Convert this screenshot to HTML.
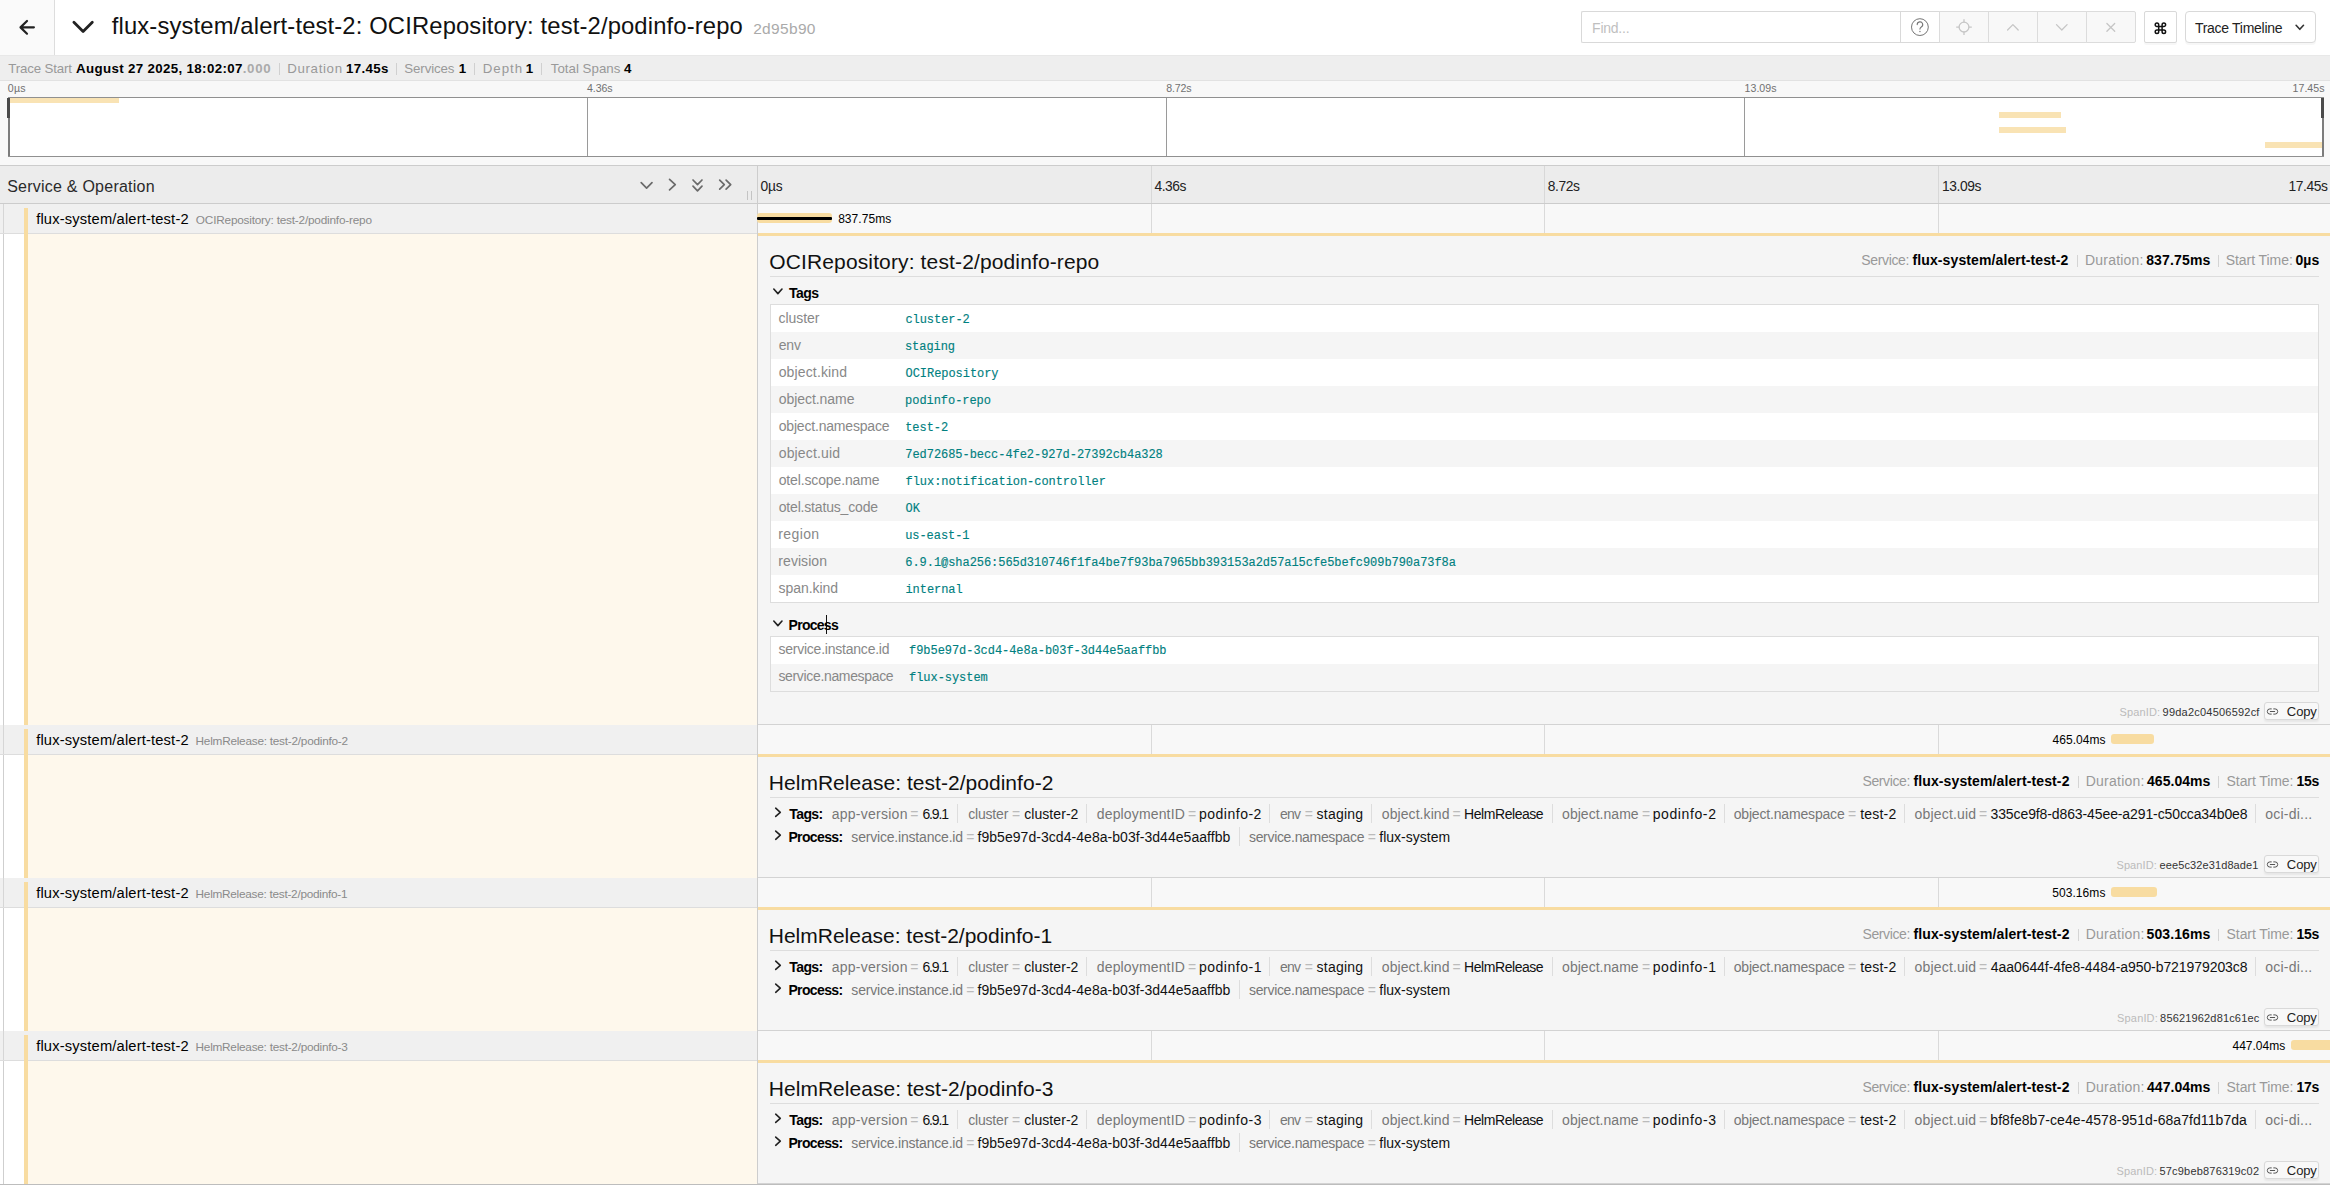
<!DOCTYPE html>
<html><head><meta charset="utf-8"><title>Jaeger UI</title><style>
html,body{margin:0;padding:0}body{width:2330px;height:1186px;overflow:hidden;background:#fff;position:relative;font-family:'Liberation Sans',sans-serif}
#bg div{position:absolute}
#tx span{position:absolute;white-space:pre;line-height:1}
svg{position:absolute;left:0;top:0}
</style></head><body>
<div id="bg">
<div style="left:0px;top:0px;width:2330px;height:55px;background:#fff;"></div>
<div style="left:0px;top:0px;width:54px;height:55px;background:#fafafa;"></div>
<div style="left:54px;top:0px;width:1px;height:55px;background:#dddddd;"></div>
<div style="left:0px;top:55px;width:2330px;height:1px;background:#e8e8e8;"></div>
<div style="left:1581px;top:11px;width:320px;height:32px;background:#fff;border:1px solid #d9d9d9;border-right:none;border-radius:2px 0 0 2px;box-sizing:border-box"></div>
<div style="left:1900px;top:11px;width:40px;height:32px;background:#fff;border:1px solid #d9d9d9;box-sizing:border-box"></div>
<div style="left:1939px;top:11px;width:50px;height:32px;background:#f8f8f8;border:1px solid #dcdcdc;box-sizing:border-box"></div>
<div style="left:1988px;top:11px;width:50px;height:32px;background:#f8f8f8;border:1px solid #dcdcdc;box-sizing:border-box"></div>
<div style="left:2037px;top:11px;width:50px;height:32px;background:#f8f8f8;border:1px solid #dcdcdc;box-sizing:border-box"></div>
<div style="left:2086px;top:11px;width:50px;height:32px;background:#f8f8f8;border:1px solid #dcdcdc;box-sizing:border-box;border-radius:0 2px 2px 0"></div>
<div style="left:2144px;top:11px;width:33px;height:32px;background:#fff;border:1px solid #d9d9d9;border-radius:2px;box-sizing:border-box;box-shadow:0 2px 0 rgba(0,0,0,0.03)"></div>
<div style="left:2185px;top:11px;width:131px;height:32px;background:#fff;border:1px solid #d9d9d9;border-radius:4px;box-sizing:border-box;box-shadow:0 2px 0 rgba(0,0,0,0.03)"></div>
<div style="left:0px;top:56px;width:2330px;height:24px;background:#eeeeee;"></div>
<div style="left:0px;top:80px;width:2330px;height:1px;background:#e2e2e2;"></div>
<div style="left:279px;top:63px;width:1px;height:12px;background:#d0d0d0;"></div>
<div style="left:396px;top:63px;width:1px;height:12px;background:#d0d0d0;"></div>
<div style="left:474px;top:63px;width:1px;height:12px;background:#d0d0d0;"></div>
<div style="left:541px;top:63px;width:1px;height:12px;background:#d0d0d0;"></div>
<div style="left:0px;top:81px;width:2330px;height:84px;background:#f8f8f8;"></div>
<div style="left:0px;top:165px;width:2330px;height:1px;background:#cccccc;"></div>
<div style="left:8px;top:97px;width:2316px;height:60px;background:#fff;border:1px solid #909090;box-sizing:border-box"></div>
<div style="left:587px;top:98px;width:1px;height:58px;background:#9a9a9a;"></div>
<div style="left:1166px;top:98px;width:1px;height:58px;background:#9a9a9a;"></div>
<div style="left:1744px;top:98px;width:1px;height:58px;background:#9a9a9a;"></div>
<div style="left:10px;top:98px;width:109px;height:5px;background:#f9e3b4;"></div>
<div style="left:1999px;top:112px;width:62px;height:6px;background:#f9e3b4;"></div>
<div style="left:1999px;top:127px;width:67px;height:6px;background:#f9e3b4;"></div>
<div style="left:2265px;top:142px;width:57px;height:6px;background:#f9e3b4;"></div>
<div style="left:8px;top:98px;width:2px;height:58px;background:#7c7c7c;"></div>
<div style="left:7px;top:98px;width:3px;height:20px;background:#4a4a4a;"></div>
<div style="left:2322px;top:98px;width:2px;height:58px;background:#7c7c7c;"></div>
<div style="left:2321px;top:98px;width:3px;height:20px;background:#4a4a4a;"></div>
<div style="left:0px;top:166px;width:2330px;height:37px;background:#ececec;"></div>
<div style="left:0px;top:203px;width:2330px;height:1px;background:#cccccc;"></div>
<div style="left:1151px;top:166px;width:1px;height:37px;background:#d8d8d8;"></div>
<div style="left:1544px;top:166px;width:1px;height:37px;background:#d8d8d8;"></div>
<div style="left:1938px;top:166px;width:1px;height:37px;background:#d8d8d8;"></div>
<div style="left:747px;top:191px;width:1px;height:9px;background:#c4c4c4;"></div>
<div style="left:751px;top:191px;width:1px;height:9px;background:#c4c4c4;"></div>
<div style="left:0px;top:204px;width:757px;height:981px;background:#fff;"></div>
<div style="left:757px;top:166px;width:1px;height:1019px;background:#cdcdcd;"></div>
<div style="left:3px;top:204px;width:1px;height:981px;background:#cfcfcf;"></div>
<div style="left:0px;top:204px;width:757px;height:29px;background:#f0f0f0;"></div>
<div style="left:0px;top:233px;width:757px;height:1px;background:#dddddd;"></div>
<div style="left:3px;top:204px;width:1px;height:29px;background:#d6d6d6;"></div>
<div style="left:758px;top:204px;width:1572px;height:29px;background:#f8f8f8;"></div>
<div style="left:1151px;top:204px;width:1px;height:29px;background:#dadada;"></div>
<div style="left:1544px;top:204px;width:1px;height:29px;background:#dadada;"></div>
<div style="left:1938px;top:204px;width:1px;height:29px;background:#dadada;"></div>
<div style="left:24px;top:208px;width:4px;height:517px;background:#f8dca1;"></div>
<div style="left:28px;top:234px;width:729px;height:491px;background:#fef8ec;"></div>
<div style="left:757px;top:213px;width:75px;height:10px;background:#f8dca1;border-radius:3px"></div>
<div style="left:757px;top:216.5px;width:75px;height:3.6px;background:#000;border-radius:1px"></div>
<div style="left:758px;top:233px;width:1572px;height:491px;background:#f5f5f5;"></div>
<div style="left:758px;top:233px;width:1572px;height:3px;background:#f8dca1;"></div>
<div style="left:758px;top:724px;width:1572px;height:1px;background:#d3d3d3;"></div>
<div style="left:2077px;top:255px;width:1px;height:12px;background:#d4d4d4;"></div>
<div style="left:2218px;top:255px;width:1px;height:12px;background:#d4d4d4;"></div>
<div style="left:770px;top:276px;width:1549px;height:1px;background:#dddddd;"></div>
<div style="left:2264px;top:702px;width:55px;height:18px;background:#f8f8f8;border:1px solid #d9d9d9;border-radius:3px;box-sizing:border-box;box-shadow:0 2px 2px rgba(0,0,0,0.06)"></div>
<div style="left:770px;top:304px;width:1549px;height:299px;background:#fff;border:1px solid #dddddd;box-sizing:border-box"></div>
<div style="left:771px;top:332px;width:1547px;height:27px;background:#f5f5f5;"></div>
<div style="left:771px;top:386px;width:1547px;height:27px;background:#f5f5f5;"></div>
<div style="left:771px;top:440px;width:1547px;height:27px;background:#f5f5f5;"></div>
<div style="left:771px;top:494px;width:1547px;height:27px;background:#f5f5f5;"></div>
<div style="left:771px;top:548px;width:1547px;height:27px;background:#f5f5f5;"></div>
<div style="left:770px;top:636px;width:1549px;height:56px;background:#fff;border:1px solid #dddddd;box-sizing:border-box"></div>
<div style="left:771px;top:664px;width:1547px;height:27px;background:#f5f5f5;"></div>
<div style="left:826px;top:615px;width:1px;height:19px;background:#111;"></div>
<div style="left:0px;top:725px;width:757px;height:29px;background:#f0f0f0;"></div>
<div style="left:0px;top:754px;width:757px;height:1px;background:#dddddd;"></div>
<div style="left:3px;top:725px;width:1px;height:29px;background:#d6d6d6;"></div>
<div style="left:758px;top:725px;width:1572px;height:29px;background:#f8f8f8;"></div>
<div style="left:1151px;top:725px;width:1px;height:29px;background:#dadada;"></div>
<div style="left:1544px;top:725px;width:1px;height:29px;background:#dadada;"></div>
<div style="left:1938px;top:725px;width:1px;height:29px;background:#dadada;"></div>
<div style="left:24px;top:729px;width:4px;height:149px;background:#f8dca1;"></div>
<div style="left:28px;top:755px;width:729px;height:123px;background:#fef8ec;"></div>
<div style="left:2111px;top:734px;width:43px;height:10px;background:#f8dca1;border-radius:3px"></div>
<div style="left:758px;top:754px;width:1572px;height:123px;background:#f5f5f5;"></div>
<div style="left:758px;top:754px;width:1572px;height:3px;background:#f8dca1;"></div>
<div style="left:758px;top:877px;width:1572px;height:1px;background:#d3d3d3;"></div>
<div style="left:2078px;top:776px;width:1px;height:12px;background:#d4d4d4;"></div>
<div style="left:2218px;top:776px;width:1px;height:12px;background:#d4d4d4;"></div>
<div style="left:770px;top:797px;width:1549px;height:1px;background:#dddddd;"></div>
<div style="left:2264px;top:855px;width:55px;height:18px;background:#f8f8f8;border:1px solid #d9d9d9;border-radius:3px;box-sizing:border-box;box-shadow:0 2px 2px rgba(0,0,0,0.06)"></div>
<div style="left:957px;top:804px;width:1px;height:19px;background:#dddddd;"></div>
<div style="left:1086px;top:804px;width:1px;height:19px;background:#dddddd;"></div>
<div style="left:1269px;top:804px;width:1px;height:19px;background:#dddddd;"></div>
<div style="left:1371px;top:804px;width:1px;height:19px;background:#dddddd;"></div>
<div style="left:1552px;top:804px;width:1px;height:19px;background:#dddddd;"></div>
<div style="left:1724px;top:804px;width:1px;height:19px;background:#dddddd;"></div>
<div style="left:1904px;top:804px;width:1px;height:19px;background:#dddddd;"></div>
<div style="left:2255px;top:804px;width:1px;height:19px;background:#dddddd;"></div>
<div style="left:1239px;top:827px;width:1px;height:19px;background:#dddddd;"></div>
<div style="left:0px;top:878px;width:757px;height:29px;background:#f0f0f0;"></div>
<div style="left:0px;top:907px;width:757px;height:1px;background:#dddddd;"></div>
<div style="left:3px;top:878px;width:1px;height:29px;background:#d6d6d6;"></div>
<div style="left:758px;top:878px;width:1572px;height:29px;background:#f8f8f8;"></div>
<div style="left:1151px;top:878px;width:1px;height:29px;background:#dadada;"></div>
<div style="left:1544px;top:878px;width:1px;height:29px;background:#dadada;"></div>
<div style="left:1938px;top:878px;width:1px;height:29px;background:#dadada;"></div>
<div style="left:24px;top:882px;width:4px;height:149px;background:#f8dca1;"></div>
<div style="left:28px;top:908px;width:729px;height:123px;background:#fef8ec;"></div>
<div style="left:2111px;top:887px;width:46px;height:10px;background:#f8dca1;border-radius:3px"></div>
<div style="left:758px;top:907px;width:1572px;height:123px;background:#f5f5f5;"></div>
<div style="left:758px;top:907px;width:1572px;height:3px;background:#f8dca1;"></div>
<div style="left:758px;top:1030px;width:1572px;height:1px;background:#d3d3d3;"></div>
<div style="left:2078px;top:929px;width:1px;height:12px;background:#d4d4d4;"></div>
<div style="left:2218px;top:929px;width:1px;height:12px;background:#d4d4d4;"></div>
<div style="left:770px;top:950px;width:1549px;height:1px;background:#dddddd;"></div>
<div style="left:2264px;top:1008px;width:55px;height:18px;background:#f8f8f8;border:1px solid #d9d9d9;border-radius:3px;box-sizing:border-box;box-shadow:0 2px 2px rgba(0,0,0,0.06)"></div>
<div style="left:957px;top:957px;width:1px;height:19px;background:#dddddd;"></div>
<div style="left:1086px;top:957px;width:1px;height:19px;background:#dddddd;"></div>
<div style="left:1269px;top:957px;width:1px;height:19px;background:#dddddd;"></div>
<div style="left:1371px;top:957px;width:1px;height:19px;background:#dddddd;"></div>
<div style="left:1552px;top:957px;width:1px;height:19px;background:#dddddd;"></div>
<div style="left:1724px;top:957px;width:1px;height:19px;background:#dddddd;"></div>
<div style="left:1904px;top:957px;width:1px;height:19px;background:#dddddd;"></div>
<div style="left:2255px;top:957px;width:1px;height:19px;background:#dddddd;"></div>
<div style="left:1239px;top:980px;width:1px;height:19px;background:#dddddd;"></div>
<div style="left:0px;top:1031px;width:757px;height:29px;background:#f0f0f0;"></div>
<div style="left:0px;top:1060px;width:757px;height:1px;background:#dddddd;"></div>
<div style="left:3px;top:1031px;width:1px;height:29px;background:#d6d6d6;"></div>
<div style="left:758px;top:1031px;width:1572px;height:29px;background:#f8f8f8;"></div>
<div style="left:1151px;top:1031px;width:1px;height:29px;background:#dadada;"></div>
<div style="left:1544px;top:1031px;width:1px;height:29px;background:#dadada;"></div>
<div style="left:1938px;top:1031px;width:1px;height:29px;background:#dadada;"></div>
<div style="left:24px;top:1035px;width:4px;height:149px;background:#f8dca1;"></div>
<div style="left:28px;top:1061px;width:729px;height:123px;background:#fef8ec;"></div>
<div style="left:2291px;top:1040px;width:39px;height:10px;background:#f8dca1;border-radius:3px 0 0 3px"></div>
<div style="left:758px;top:1060px;width:1572px;height:123px;background:#f5f5f5;"></div>
<div style="left:758px;top:1060px;width:1572px;height:3px;background:#f8dca1;"></div>
<div style="left:758px;top:1183px;width:1572px;height:1px;background:#d3d3d3;"></div>
<div style="left:2078px;top:1082px;width:1px;height:12px;background:#d4d4d4;"></div>
<div style="left:2218px;top:1082px;width:1px;height:12px;background:#d4d4d4;"></div>
<div style="left:770px;top:1103px;width:1549px;height:1px;background:#dddddd;"></div>
<div style="left:2264px;top:1161px;width:55px;height:18px;background:#f8f8f8;border:1px solid #d9d9d9;border-radius:3px;box-sizing:border-box;box-shadow:0 2px 2px rgba(0,0,0,0.06)"></div>
<div style="left:957px;top:1110px;width:1px;height:19px;background:#dddddd;"></div>
<div style="left:1086px;top:1110px;width:1px;height:19px;background:#dddddd;"></div>
<div style="left:1269px;top:1110px;width:1px;height:19px;background:#dddddd;"></div>
<div style="left:1371px;top:1110px;width:1px;height:19px;background:#dddddd;"></div>
<div style="left:1552px;top:1110px;width:1px;height:19px;background:#dddddd;"></div>
<div style="left:1724px;top:1110px;width:1px;height:19px;background:#dddddd;"></div>
<div style="left:1904px;top:1110px;width:1px;height:19px;background:#dddddd;"></div>
<div style="left:2255px;top:1110px;width:1px;height:19px;background:#dddddd;"></div>
<div style="left:1239px;top:1133px;width:1px;height:19px;background:#dddddd;"></div>
<div style="left:0px;top:1184px;width:2330px;height:1px;background:#bdbdbd;"></div>
<div style="left:0px;top:1185px;width:2330px;height:1px;background:#ffffff;"></div>
</div>
<svg width="2330" height="1186" viewBox="0 0 2330 1186">
<path d="M2271.3,708.9 h-1.4 a2.6,2.6 0 0 0 0,5.2 h1.4 M2273.7,708.9 h1.4 a2.6,2.6 0 0 1 0,5.2 h-1.4 M2270.3,711.5 h4.4" stroke="#555" stroke-width="1.0" fill="none" stroke-linecap="round"/>
<path d="M773.80,289.00 L777.90,293.60 L782.00,289.00" stroke="#222" stroke-width="1.6" fill="none" stroke-linecap="round" stroke-linejoin="round"/>
<path d="M773.80,621.00 L777.90,625.60 L782.00,621.00" stroke="#222" stroke-width="1.6" fill="none" stroke-linecap="round" stroke-linejoin="round"/>
<path d="M2271.3,861.9 h-1.4 a2.6,2.6 0 0 0 0,5.2 h1.4 M2273.7,861.9 h1.4 a2.6,2.6 0 0 1 0,5.2 h-1.4 M2270.3,864.5 h4.4" stroke="#555" stroke-width="1.0" fill="none" stroke-linecap="round"/>
<path d="M775.70,808.20 L780.30,812.30 L775.70,816.40" stroke="#222" stroke-width="1.6" fill="none" stroke-linecap="round" stroke-linejoin="round"/>
<path d="M775.70,831.10 L780.30,835.20 L775.70,839.30" stroke="#222" stroke-width="1.6" fill="none" stroke-linecap="round" stroke-linejoin="round"/>
<path d="M2271.3,1014.9 h-1.4 a2.6,2.6 0 0 0 0,5.2 h1.4 M2273.7,1014.9 h1.4 a2.6,2.6 0 0 1 0,5.2 h-1.4 M2270.3,1017.5 h4.4" stroke="#555" stroke-width="1.0" fill="none" stroke-linecap="round"/>
<path d="M775.70,961.20 L780.30,965.30 L775.70,969.40" stroke="#222" stroke-width="1.6" fill="none" stroke-linecap="round" stroke-linejoin="round"/>
<path d="M775.70,984.10 L780.30,988.20 L775.70,992.30" stroke="#222" stroke-width="1.6" fill="none" stroke-linecap="round" stroke-linejoin="round"/>
<path d="M2271.3,1167.9 h-1.4 a2.6,2.6 0 0 0 0,5.2 h1.4 M2273.7,1167.9 h1.4 a2.6,2.6 0 0 1 0,5.2 h-1.4 M2270.3,1170.5 h4.4" stroke="#555" stroke-width="1.0" fill="none" stroke-linecap="round"/>
<path d="M775.70,1114.20 L780.30,1118.30 L775.70,1122.40" stroke="#222" stroke-width="1.6" fill="none" stroke-linecap="round" stroke-linejoin="round"/>
<path d="M775.70,1137.10 L780.30,1141.20 L775.70,1145.30" stroke="#222" stroke-width="1.6" fill="none" stroke-linecap="round" stroke-linejoin="round"/>
<path d="M33.9,27.35 H20.6 M27.0,21.0 L20.5,27.35 L27.0,33.7" stroke="#222" stroke-width="2.2" fill="none" stroke-linecap="round" stroke-linejoin="round"/>
<path d="M73.9,22.2 L83.1,31.4 L92.3,22.2" stroke="#222" stroke-width="2.8" fill="none" stroke-linecap="round" stroke-linejoin="round"/>
<circle cx="1919.9" cy="27.1" r="8.4" stroke="#757575" stroke-width="1.0" fill="none"/>
<path d="M1917.2,24.6 a2.75,2.75 0 1 1 4.1,2.4 c-0.9,0.55 -1.35,1.0 -1.35,2.1" stroke="#757575" stroke-width="1.1" fill="none" stroke-linecap="round"/><circle cx="1919.95" cy="31.5" r="0.7" fill="#757575"/>
<circle cx="1964" cy="27.1" r="4.9" stroke="#c6c6c6" stroke-width="1.3" fill="none"/><path d="M1964,19.3 v3.2 M1964,31.7 v3.2 M1956.2,27.1 h3.2 M1968.6,27.1 h3.2" stroke="#c6c6c6" stroke-width="1.3" fill="none"/>
<path d="M2007.60,30.00 L2012.90,24.60 L2018.20,30.00" stroke="#c6c6c6" stroke-width="1.3" fill="none" stroke-linecap="round" stroke-linejoin="round"/>
<path d="M2056.50,24.60 L2061.80,30.00 L2067.10,24.60" stroke="#c6c6c6" stroke-width="1.3" fill="none" stroke-linecap="round" stroke-linejoin="round"/>
<path d="M2106.9,23.5 L2114.7,31.3 M2114.7,23.5 L2106.9,31.3" stroke="#c6c6c6" stroke-width="1.3" fill="none" stroke-linecap="round"/>
<path d="M2158.7000000000003,24.85 V31.75 M2162.1,24.85 V31.75 M2156.9500000000003,26.6 H2163.85 M2156.9500000000003,30.0 H2163.85 M2158.7000000000003,24.85 A1.75,1.75 0 1 0 2156.9500000000003,26.6 M2162.1,24.85 A1.75,1.75 0 1 1 2163.85,26.6 M2158.7000000000003,31.75 A1.75,1.75 0 1 1 2156.9500000000003,30.0 M2162.1,31.75 A1.75,1.75 0 1 0 2163.85,30.0 " stroke="#111" stroke-width="1.5" fill="none"/>
<path d="M2296.10,25.30 L2299.80,29.30 L2303.50,25.30" stroke="#333" stroke-width="1.6" fill="none" stroke-linecap="round" stroke-linejoin="round"/>
<path d="M641.20,182.55 L646.60,188.05 L652.00,182.55" stroke="#6a6a6a" stroke-width="1.7" fill="none" stroke-linecap="round" stroke-linejoin="round"/>
<path d="M669.55,179.30 L675.25,184.60 L669.55,189.90" stroke="#6a6a6a" stroke-width="1.7" fill="none" stroke-linecap="round" stroke-linejoin="round"/>
<path d="M693.00,180.00 L697.50,184.60 L702.00,180.00" stroke="#6a6a6a" stroke-width="1.7" fill="none" stroke-linecap="round" stroke-linejoin="round"/>
<path d="M693.00,186.20 L697.50,190.80 L702.00,186.20" stroke="#6a6a6a" stroke-width="1.7" fill="none" stroke-linecap="round" stroke-linejoin="round"/>
<path d="M719.70,180.20 L724.30,184.70 L719.70,189.20" stroke="#6a6a6a" stroke-width="1.7" fill="none" stroke-linecap="round" stroke-linejoin="round"/>
<path d="M726.10,180.20 L730.70,184.70 L726.10,189.20" stroke="#6a6a6a" stroke-width="1.7" fill="none" stroke-linecap="round" stroke-linejoin="round"/>
</svg>
<div id="tx">
<span id="t0" style="left:111.78px;top:13.57px;font-size:23.8px;color:#111;letter-spacing:0.137px">flux-system/alert-test-2: OCIRepository: test-2/podinfo-repo</span>
<span id="t1" style="left:753.15px;top:20.53px;font-size:15.5px;color:#aaa;letter-spacing:0.329px">2d95b90</span>
<span id="t2" style="left:1592.09px;top:21.10px;font-size:14px;color:#bfbfbf;letter-spacing:-0.241px">Find...</span>
<span id="t3" style="left:2194.91px;top:20.70px;font-size:14px;color:#222;letter-spacing:-0.283px">Trace Timeline</span>
<span id="t4" style="left:8.24px;top:62.40px;font-size:13.3px;color:#999;letter-spacing:-0.162px">Trace Start</span>
<span id="t5" style="left:76.06px;top:62.40px;font-size:13.3px;color:#000;font-weight:700;letter-spacing:0.352px">August 27 2025, 18:02:07</span>
<span id="t6" style="left:242.64px;top:62.40px;font-size:13.3px;color:#aaa;font-weight:700;letter-spacing:0.722px">.000</span>
<span id="t7" style="left:287.28px;top:62.40px;font-size:13.3px;color:#999;letter-spacing:0.644px">Duration</span>
<span id="t8" style="left:345.90px;top:62.40px;font-size:13.3px;color:#000;font-weight:700;letter-spacing:0.375px">17.45s</span>
<span id="t9" style="left:404.32px;top:62.40px;font-size:13.3px;color:#999;letter-spacing:-0.115px">Services</span>
<span id="t10" style="left:458.68px;top:62.40px;font-size:13.3px;color:#000;font-weight:700">1</span>
<span id="t11" style="left:482.66px;top:62.40px;font-size:13.3px;color:#999;letter-spacing:1.010px">Depth</span>
<span id="t12" style="left:525.68px;top:62.40px;font-size:13.3px;color:#000;font-weight:700">1</span>
<span id="t13" style="left:550.73px;top:62.40px;font-size:13.3px;color:#999;letter-spacing:0.020px">Total Spans</span>
<span id="t14" style="left:623.89px;top:62.40px;font-size:13.3px;color:#000;font-weight:700">4</span>
<span id="t15" style="left:7.81px;top:82.99px;font-size:10.6px;color:#717171;letter-spacing:0.195px">0µs</span>
<span id="t16" style="left:587.07px;top:82.99px;font-size:10.6px;color:#717171;letter-spacing:-0.106px">4.36s</span>
<span id="t17" style="left:1166.13px;top:82.99px;font-size:10.6px;color:#717171;letter-spacing:-0.111px">8.72s</span>
<span id="t18" style="left:1744.62px;top:82.99px;font-size:10.6px;color:#717171;letter-spacing:0.002px">13.09s</span>
<span id="t19" style="left:2292.62px;top:82.99px;font-size:10.6px;color:#717171;letter-spacing:0.004px">17.45s</span>
<span id="t20" style="left:7.20px;top:179.20px;font-size:16px;color:#2a2a2a;letter-spacing:0.234px">Service &amp; Operation</span>
<span id="t21" style="left:760.56px;top:180.07px;font-size:13.8px;color:#222;letter-spacing:-0.238px">0µs</span>
<span id="t22" style="left:1154.44px;top:180.07px;font-size:13.8px;color:#222;letter-spacing:-0.443px">4.36s</span>
<span id="t23" style="left:1547.85px;top:180.07px;font-size:13.8px;color:#222;letter-spacing:-0.427px">8.72s</span>
<span id="t24" style="left:1942.08px;top:180.07px;font-size:13.8px;color:#222;letter-spacing:-0.418px">13.09s</span>
<span id="t25" style="left:2288.40px;top:180.07px;font-size:13.8px;color:#222;letter-spacing:-0.374px">17.45s</span>
<span id="t26" style="left:36.17px;top:211.60px;font-size:14.7px;color:#000;letter-spacing:0.170px">flux-system/alert-test-2</span>
<span id="t27" style="left:195.86px;top:215.37px;font-size:11.8px;color:#8a8a8a;letter-spacing:-0.207px">OCIRepository: test-2/podinfo-repo</span>
<span id="t28" style="left:838.13px;top:213.40px;font-size:12px;color:#000;letter-spacing:0.059px">837.75ms</span>
<span id="t29" style="left:769.28px;top:251.15px;font-size:21px;color:#111;letter-spacing:0.132px">OCIRepository: test-2/podinfo-repo</span>
<span id="t30" style="left:1861.25px;top:252.90px;font-size:14px;color:#999;letter-spacing:-0.339px">Service:</span>
<span id="t31" style="left:1912.50px;top:252.90px;font-size:14px;color:#000;font-weight:700;letter-spacing:0.114px">flux-system/alert-test-2</span>
<span id="t32" style="left:2084.98px;top:252.90px;font-size:14px;color:#999;letter-spacing:0.213px">Duration:</span>
<span id="t33" style="left:2146.13px;top:252.90px;font-size:14px;color:#000;font-weight:700;letter-spacing:0.158px">837.75ms</span>
<span id="t34" style="left:2225.70px;top:252.90px;font-size:14px;color:#999;letter-spacing:-0.055px">Start Time:</span>
<span id="t35" style="left:2295.38px;top:252.90px;font-size:14px;color:#000;font-weight:700;letter-spacing:0.195px">0µs</span>
<span id="t36" style="left:2119.62px;top:707.35px;font-size:11px;color:#bbb;letter-spacing:0.112px">SpanID:</span>
<span id="t37" style="left:2162.58px;top:707.35px;font-size:11px;color:#333;letter-spacing:0.217px">99da2c04506592cf</span>
<span id="t38" style="left:2286.87px;top:704.55px;font-size:13px;color:#222;letter-spacing:-0.113px">Copy</span>
<span id="t39" style="left:789.07px;top:285.90px;font-size:14px;color:#000;font-weight:700;letter-spacing:-0.516px">Tags</span>
<span id="t40" style="left:778.56px;top:310.80px;font-size:14px;color:#888;letter-spacing:-0.049px">cluster</span>
<span id="t41" style="left:905.41px;top:313.58px;font-size:12px;color:#008080;font-family:'Liberation Mono',monospace;-webkit-text-stroke:0.14px #008080;letter-spacing:-0.050px">cluster-2</span>
<span id="t42" style="left:778.71px;top:337.80px;font-size:14px;color:#888;letter-spacing:-0.163px">env</span>
<span id="t43" style="left:904.93px;top:340.58px;font-size:12px;color:#008080;font-family:'Liberation Mono',monospace;-webkit-text-stroke:0.14px #008080;letter-spacing:-0.050px">staging</span>
<span id="t44" style="left:778.69px;top:364.80px;font-size:14px;color:#888;letter-spacing:0.140px">object.kind</span>
<span id="t45" style="left:905.56px;top:367.58px;font-size:12px;color:#008080;font-family:'Liberation Mono',monospace;-webkit-text-stroke:0.14px #008080;letter-spacing:-0.050px">OCIRepository</span>
<span id="t46" style="left:778.69px;top:391.80px;font-size:14px;color:#888;letter-spacing:-0.050px">object.name</span>
<span id="t47" style="left:905.10px;top:394.58px;font-size:12px;color:#008080;font-family:'Liberation Mono',monospace;-webkit-text-stroke:0.14px #008080;letter-spacing:-0.050px">podinfo-repo</span>
<span id="t48" style="left:778.69px;top:418.80px;font-size:14px;color:#888;letter-spacing:-0.183px">object.namespace</span>
<span id="t49" style="left:905.20px;top:421.58px;font-size:12px;color:#008080;font-family:'Liberation Mono',monospace;-webkit-text-stroke:0.14px #008080;letter-spacing:-0.050px">test-2</span>
<span id="t50" style="left:778.69px;top:445.80px;font-size:14px;color:#888;letter-spacing:0.165px">object.uid</span>
<span id="t51" style="left:905.31px;top:448.58px;font-size:12px;color:#008080;font-family:'Liberation Mono',monospace;-webkit-text-stroke:0.14px #008080;letter-spacing:-0.050px">7ed72685-becc-4fe2-927d-27392cb4a328</span>
<span id="t52" style="left:778.69px;top:472.80px;font-size:14px;color:#888;letter-spacing:-0.136px">otel.scope.name</span>
<span id="t53" style="left:905.55px;top:475.58px;font-size:12px;color:#008080;font-family:'Liberation Mono',monospace;-webkit-text-stroke:0.14px #008080;letter-spacing:-0.050px">flux:notification-controller</span>
<span id="t54" style="left:778.69px;top:499.80px;font-size:14px;color:#888;letter-spacing:-0.174px">otel.status_code</span>
<span id="t55" style="left:905.56px;top:502.58px;font-size:12px;color:#008080;font-family:'Liberation Mono',monospace;-webkit-text-stroke:0.14px #008080;letter-spacing:-0.050px">OK</span>
<span id="t56" style="left:778.35px;top:526.80px;font-size:14px;color:#888;letter-spacing:0.363px">region</span>
<span id="t57" style="left:905.14px;top:529.58px;font-size:12px;color:#008080;font-family:'Liberation Mono',monospace;-webkit-text-stroke:0.14px #008080;letter-spacing:-0.050px">us-east-1</span>
<span id="t58" style="left:778.35px;top:553.80px;font-size:14px;color:#888;letter-spacing:0.053px">revision</span>
<span id="t59" style="left:905.29px;top:556.58px;font-size:12px;color:#008080;font-family:'Liberation Mono',monospace;-webkit-text-stroke:0.14px #008080;letter-spacing:-0.050px">6.9.1@sha256:565d310746f1fa4be7f93ba7965bb393153a2d57a15cfe5befc909b790a73f8a</span>
<span id="t60" style="left:778.59px;top:580.80px;font-size:14px;color:#888;letter-spacing:-0.067px">span.kind</span>
<span id="t61" style="left:905.46px;top:583.58px;font-size:12px;color:#008080;font-family:'Liberation Mono',monospace;-webkit-text-stroke:0.14px #008080;letter-spacing:-0.050px">internal</span>
<span id="t62" style="left:788.55px;top:618.00px;font-size:14px;color:#000;font-weight:700;letter-spacing:-0.720px">Process</span>
<span id="t63" style="left:778.42px;top:641.90px;font-size:14px;color:#888;letter-spacing:-0.224px">service.instance.id</span>
<span id="t64" style="left:909.07px;top:644.68px;font-size:12px;color:#008080;font-family:'Liberation Mono',monospace;-webkit-text-stroke:0.14px #008080;letter-spacing:-0.050px">f9b5e97d-3cd4-4e8a-b03f-3d44e5aaffbb</span>
<span id="t65" style="left:778.42px;top:669.00px;font-size:14px;color:#888;letter-spacing:-0.339px">service.namespace</span>
<span id="t66" style="left:909.07px;top:671.78px;font-size:12px;color:#008080;font-family:'Liberation Mono',monospace;-webkit-text-stroke:0.14px #008080;letter-spacing:-0.050px">flux-system</span>
<span id="t67" style="left:36.17px;top:732.61px;font-size:14.7px;color:#000;letter-spacing:0.170px">flux-system/alert-test-2</span>
<span id="t68" style="left:195.60px;top:736.37px;font-size:11.8px;color:#8a8a8a;letter-spacing:-0.246px">HelmRelease: test-2/podinfo-2</span>
<span id="t69" style="left:2052.55px;top:734.40px;font-size:12px;color:#000;letter-spacing:0.035px">465.04ms</span>
<span id="t70" style="left:768.77px;top:772.15px;font-size:21px;color:#111;letter-spacing:0.034px">HelmRelease: test-2/podinfo-2</span>
<span id="t71" style="left:1862.48px;top:773.90px;font-size:14px;color:#999;letter-spacing:-0.383px">Service:</span>
<span id="t72" style="left:1913.46px;top:773.90px;font-size:14px;color:#000;font-weight:700;letter-spacing:0.117px">flux-system/alert-test-2</span>
<span id="t73" style="left:2085.67px;top:773.90px;font-size:14px;color:#999;letter-spacing:0.247px">Duration:</span>
<span id="t74" style="left:2147.04px;top:773.90px;font-size:14px;color:#000;font-weight:700;letter-spacing:0.028px">465.04ms</span>
<span id="t75" style="left:2226.61px;top:773.90px;font-size:14px;color:#999;letter-spacing:-0.090px">Start Time:</span>
<span id="t76" style="left:2296.60px;top:773.90px;font-size:14px;color:#000;font-weight:700;letter-spacing:-0.336px">15s</span>
<span id="t77" style="left:2116.45px;top:860.35px;font-size:11px;color:#bbb;letter-spacing:0.111px">SpanID:</span>
<span id="t78" style="left:2159.48px;top:860.35px;font-size:11px;color:#333;letter-spacing:0.113px">eee5c32e31d8ade1</span>
<span id="t79" style="left:2286.87px;top:857.55px;font-size:13px;color:#222;letter-spacing:-0.113px">Copy</span>
<span id="t80" style="left:789.36px;top:807.30px;font-size:14px;color:#000;font-weight:700;letter-spacing:-0.623px">Tags:</span>
<span id="t81" style="left:831.72px;top:807.30px;font-size:14px;color:#777;letter-spacing:0.257px">app-version</span>
<span id="t82" style="left:910.26px;top:807.30px;font-size:14px;color:#bbb">=</span>
<span id="t83" style="left:922.38px;top:807.30px;font-size:14px;color:#111;letter-spacing:-1.115px">6.9.1</span>
<span id="t84" style="left:968.14px;top:807.30px;font-size:14px;color:#777;letter-spacing:-0.178px">cluster</span>
<span id="t85" style="left:1011.99px;top:807.30px;font-size:14px;color:#bbb">=</span>
<span id="t86" style="left:1024.14px;top:807.30px;font-size:14px;color:#111;letter-spacing:0.075px">cluster-2</span>
<span id="t87" style="left:1096.83px;top:807.30px;font-size:14px;color:#777;letter-spacing:0.144px">deploymentID</span>
<span id="t88" style="left:1188.02px;top:807.30px;font-size:14px;color:#bbb">=</span>
<span id="t89" style="left:1198.96px;top:807.30px;font-size:14px;color:#111;letter-spacing:0.509px">podinfo-2</span>
<span id="t90" style="left:1279.96px;top:807.30px;font-size:14px;color:#777;letter-spacing:-0.774px">env</span>
<span id="t91" style="left:1304.72px;top:807.30px;font-size:14px;color:#bbb">=</span>
<span id="t92" style="left:1316.54px;top:807.30px;font-size:14px;color:#111;letter-spacing:0.240px">staging</span>
<span id="t93" style="left:1381.83px;top:807.30px;font-size:14px;color:#777;letter-spacing:0.070px">object.kind</span>
<span id="t94" style="left:1452.48px;top:807.30px;font-size:14px;color:#bbb">=</span>
<span id="t95" style="left:1464.09px;top:807.30px;font-size:14px;color:#111;letter-spacing:-0.446px">HelmRelease</span>
<span id="t96" style="left:1562.08px;top:807.30px;font-size:14px;color:#777;letter-spacing:0.030px">object.name</span>
<span id="t97" style="left:1641.99px;top:807.30px;font-size:14px;color:#bbb">=</span>
<span id="t98" style="left:1652.69px;top:807.30px;font-size:14px;color:#111;letter-spacing:0.607px">podinfo-2</span>
<span id="t99" style="left:1733.69px;top:807.30px;font-size:14px;color:#777;letter-spacing:-0.172px">object.namespace</span>
<span id="t100" style="left:1848.01px;top:807.30px;font-size:14px;color:#bbb">=</span>
<span id="t101" style="left:1860.18px;top:807.30px;font-size:14px;color:#111;letter-spacing:0.214px">test-2</span>
<span id="t102" style="left:1914.52px;top:807.30px;font-size:14px;color:#777;letter-spacing:0.189px">object.uid</span>
<span id="t103" style="left:1979.02px;top:807.30px;font-size:14px;color:#bbb">=</span>
<span id="t104" style="left:1990.53px;top:807.30px;font-size:14px;color:#111;letter-spacing:-0.107px">335ce9f8-d863-45ee-a291-c50cca34b0e8</span>
<span id="t105" style="left:2265.21px;top:807.30px;font-size:14px;color:#777;letter-spacing:0.242px">oci-di...</span>
<span id="t106" style="left:788.39px;top:830.20px;font-size:14px;color:#000;font-weight:700;letter-spacing:-0.622px">Process:</span>
<span id="t107" style="left:851.34px;top:830.20px;font-size:14px;color:#777;letter-spacing:-0.192px">service.instance.id</span>
<span id="t108" style="left:966.21px;top:830.20px;font-size:14px;color:#bbb">=</span>
<span id="t109" style="left:977.49px;top:830.20px;font-size:14px;color:#111;letter-spacing:0.048px">f9b5e97d-3cd4-4e8a-b03f-3d44e5aaffbb</span>
<span id="t110" style="left:1248.97px;top:830.20px;font-size:14px;color:#777;letter-spacing:-0.322px">service.namespace</span>
<span id="t111" style="left:1367.76px;top:830.20px;font-size:14px;color:#bbb">=</span>
<span id="t112" style="left:1379.30px;top:830.20px;font-size:14px;color:#111;letter-spacing:0.008px">flux-system</span>
<span id="t113" style="left:36.17px;top:885.61px;font-size:14.7px;color:#000;letter-spacing:0.170px">flux-system/alert-test-2</span>
<span id="t114" style="left:195.60px;top:889.37px;font-size:11.8px;color:#8a8a8a;letter-spacing:-0.266px">HelmRelease: test-2/podinfo-1</span>
<span id="t115" style="left:2052.27px;top:887.40px;font-size:12px;color:#000;letter-spacing:0.061px">503.16ms</span>
<span id="t116" style="left:768.77px;top:925.15px;font-size:21px;color:#111;letter-spacing:-0.010px">HelmRelease: test-2/podinfo-1</span>
<span id="t117" style="left:1862.48px;top:926.90px;font-size:14px;color:#999;letter-spacing:-0.383px">Service:</span>
<span id="t118" style="left:1913.46px;top:926.90px;font-size:14px;color:#000;font-weight:700;letter-spacing:0.117px">flux-system/alert-test-2</span>
<span id="t119" style="left:2085.67px;top:926.90px;font-size:14px;color:#999;letter-spacing:0.247px">Duration:</span>
<span id="t120" style="left:2146.61px;top:926.90px;font-size:14px;color:#000;font-weight:700;letter-spacing:0.089px">503.16ms</span>
<span id="t121" style="left:2226.61px;top:926.90px;font-size:14px;color:#999;letter-spacing:-0.090px">Start Time:</span>
<span id="t122" style="left:2296.60px;top:926.90px;font-size:14px;color:#000;font-weight:700;letter-spacing:-0.336px">15s</span>
<span id="t123" style="left:2117.10px;top:1013.35px;font-size:11px;color:#bbb;letter-spacing:0.155px">SpanID:</span>
<span id="t124" style="left:2160.11px;top:1013.35px;font-size:11px;color:#333;letter-spacing:0.162px">85621962d81c61ec</span>
<span id="t125" style="left:2286.87px;top:1010.55px;font-size:13px;color:#222;letter-spacing:-0.113px">Copy</span>
<span id="t126" style="left:789.36px;top:960.30px;font-size:14px;color:#000;font-weight:700;letter-spacing:-0.623px">Tags:</span>
<span id="t127" style="left:831.72px;top:960.30px;font-size:14px;color:#777;letter-spacing:0.257px">app-version</span>
<span id="t128" style="left:910.26px;top:960.30px;font-size:14px;color:#bbb">=</span>
<span id="t129" style="left:922.38px;top:960.30px;font-size:14px;color:#111;letter-spacing:-1.115px">6.9.1</span>
<span id="t130" style="left:968.14px;top:960.30px;font-size:14px;color:#777;letter-spacing:-0.178px">cluster</span>
<span id="t131" style="left:1011.99px;top:960.30px;font-size:14px;color:#bbb">=</span>
<span id="t132" style="left:1024.14px;top:960.30px;font-size:14px;color:#111;letter-spacing:0.075px">cluster-2</span>
<span id="t133" style="left:1096.83px;top:960.30px;font-size:14px;color:#777;letter-spacing:0.144px">deploymentID</span>
<span id="t134" style="left:1188.02px;top:960.30px;font-size:14px;color:#bbb">=</span>
<span id="t135" style="left:1198.96px;top:960.30px;font-size:14px;color:#111;letter-spacing:0.518px">podinfo-1</span>
<span id="t136" style="left:1279.96px;top:960.30px;font-size:14px;color:#777;letter-spacing:-0.774px">env</span>
<span id="t137" style="left:1304.72px;top:960.30px;font-size:14px;color:#bbb">=</span>
<span id="t138" style="left:1316.54px;top:960.30px;font-size:14px;color:#111;letter-spacing:0.240px">staging</span>
<span id="t139" style="left:1381.83px;top:960.30px;font-size:14px;color:#777;letter-spacing:0.070px">object.kind</span>
<span id="t140" style="left:1452.48px;top:960.30px;font-size:14px;color:#bbb">=</span>
<span id="t141" style="left:1464.09px;top:960.30px;font-size:14px;color:#111;letter-spacing:-0.446px">HelmRelease</span>
<span id="t142" style="left:1562.08px;top:960.30px;font-size:14px;color:#777;letter-spacing:0.030px">object.name</span>
<span id="t143" style="left:1641.99px;top:960.30px;font-size:14px;color:#bbb">=</span>
<span id="t144" style="left:1652.69px;top:960.30px;font-size:14px;color:#111;letter-spacing:0.615px">podinfo-1</span>
<span id="t145" style="left:1733.69px;top:960.30px;font-size:14px;color:#777;letter-spacing:-0.172px">object.namespace</span>
<span id="t146" style="left:1848.01px;top:960.30px;font-size:14px;color:#bbb">=</span>
<span id="t147" style="left:1860.18px;top:960.30px;font-size:14px;color:#111;letter-spacing:0.214px">test-2</span>
<span id="t148" style="left:1914.52px;top:960.30px;font-size:14px;color:#777;letter-spacing:0.189px">object.uid</span>
<span id="t149" style="left:1979.02px;top:960.30px;font-size:14px;color:#bbb">=</span>
<span id="t150" style="left:1990.82px;top:960.30px;font-size:14px;color:#111;letter-spacing:-0.071px">4aa0644f-4fe8-4484-a950-b721979203c8</span>
<span id="t151" style="left:2265.21px;top:960.30px;font-size:14px;color:#777;letter-spacing:0.242px">oci-di...</span>
<span id="t152" style="left:788.39px;top:983.20px;font-size:14px;color:#000;font-weight:700;letter-spacing:-0.622px">Process:</span>
<span id="t153" style="left:851.34px;top:983.20px;font-size:14px;color:#777;letter-spacing:-0.192px">service.instance.id</span>
<span id="t154" style="left:966.21px;top:983.20px;font-size:14px;color:#bbb">=</span>
<span id="t155" style="left:977.49px;top:983.20px;font-size:14px;color:#111;letter-spacing:0.048px">f9b5e97d-3cd4-4e8a-b03f-3d44e5aaffbb</span>
<span id="t156" style="left:1248.97px;top:983.20px;font-size:14px;color:#777;letter-spacing:-0.322px">service.namespace</span>
<span id="t157" style="left:1367.76px;top:983.20px;font-size:14px;color:#bbb">=</span>
<span id="t158" style="left:1379.30px;top:983.20px;font-size:14px;color:#111;letter-spacing:0.008px">flux-system</span>
<span id="t159" style="left:36.17px;top:1038.61px;font-size:14.7px;color:#000;letter-spacing:0.170px">flux-system/alert-test-2</span>
<span id="t160" style="left:195.60px;top:1042.37px;font-size:11.8px;color:#8a8a8a;letter-spacing:-0.254px">HelmRelease: test-2/podinfo-3</span>
<span id="t161" style="left:2232.48px;top:1040.40px;font-size:12px;color:#000;letter-spacing:-0.006px">447.04ms</span>
<span id="t162" style="left:768.77px;top:1078.15px;font-size:21px;color:#111;letter-spacing:0.035px">HelmRelease: test-2/podinfo-3</span>
<span id="t163" style="left:1862.48px;top:1079.90px;font-size:14px;color:#999;letter-spacing:-0.383px">Service:</span>
<span id="t164" style="left:1913.46px;top:1079.90px;font-size:14px;color:#000;font-weight:700;letter-spacing:0.117px">flux-system/alert-test-2</span>
<span id="t165" style="left:2085.67px;top:1079.90px;font-size:14px;color:#999;letter-spacing:0.247px">Duration:</span>
<span id="t166" style="left:2147.04px;top:1079.90px;font-size:14px;color:#000;font-weight:700;letter-spacing:0.028px">447.04ms</span>
<span id="t167" style="left:2226.61px;top:1079.90px;font-size:14px;color:#999;letter-spacing:-0.090px">Start Time:</span>
<span id="t168" style="left:2296.60px;top:1079.90px;font-size:14px;color:#000;font-weight:700;letter-spacing:-0.336px">17s</span>
<span id="t169" style="left:2116.44px;top:1166.35px;font-size:11px;color:#bbb;letter-spacing:0.153px">SpanID:</span>
<span id="t170" style="left:2159.46px;top:1166.35px;font-size:11px;color:#333;letter-spacing:0.193px">57c9beb876319c02</span>
<span id="t171" style="left:2286.87px;top:1163.55px;font-size:13px;color:#222;letter-spacing:-0.113px">Copy</span>
<span id="t172" style="left:789.36px;top:1113.30px;font-size:14px;color:#000;font-weight:700;letter-spacing:-0.623px">Tags:</span>
<span id="t173" style="left:831.72px;top:1113.30px;font-size:14px;color:#777;letter-spacing:0.257px">app-version</span>
<span id="t174" style="left:910.26px;top:1113.30px;font-size:14px;color:#bbb">=</span>
<span id="t175" style="left:922.38px;top:1113.30px;font-size:14px;color:#111;letter-spacing:-1.115px">6.9.1</span>
<span id="t176" style="left:968.14px;top:1113.30px;font-size:14px;color:#777;letter-spacing:-0.178px">cluster</span>
<span id="t177" style="left:1011.99px;top:1113.30px;font-size:14px;color:#bbb">=</span>
<span id="t178" style="left:1024.14px;top:1113.30px;font-size:14px;color:#111;letter-spacing:0.075px">cluster-2</span>
<span id="t179" style="left:1096.83px;top:1113.30px;font-size:14px;color:#777;letter-spacing:0.144px">deploymentID</span>
<span id="t180" style="left:1188.02px;top:1113.30px;font-size:14px;color:#bbb">=</span>
<span id="t181" style="left:1198.96px;top:1113.30px;font-size:14px;color:#111;letter-spacing:0.516px">podinfo-3</span>
<span id="t182" style="left:1279.96px;top:1113.30px;font-size:14px;color:#777;letter-spacing:-0.774px">env</span>
<span id="t183" style="left:1304.72px;top:1113.30px;font-size:14px;color:#bbb">=</span>
<span id="t184" style="left:1316.54px;top:1113.30px;font-size:14px;color:#111;letter-spacing:0.240px">staging</span>
<span id="t185" style="left:1381.83px;top:1113.30px;font-size:14px;color:#777;letter-spacing:0.070px">object.kind</span>
<span id="t186" style="left:1452.48px;top:1113.30px;font-size:14px;color:#bbb">=</span>
<span id="t187" style="left:1464.09px;top:1113.30px;font-size:14px;color:#111;letter-spacing:-0.446px">HelmRelease</span>
<span id="t188" style="left:1562.08px;top:1113.30px;font-size:14px;color:#777;letter-spacing:0.030px">object.name</span>
<span id="t189" style="left:1641.99px;top:1113.30px;font-size:14px;color:#bbb">=</span>
<span id="t190" style="left:1652.69px;top:1113.30px;font-size:14px;color:#111;letter-spacing:0.610px">podinfo-3</span>
<span id="t191" style="left:1733.69px;top:1113.30px;font-size:14px;color:#777;letter-spacing:-0.172px">object.namespace</span>
<span id="t192" style="left:1848.01px;top:1113.30px;font-size:14px;color:#bbb">=</span>
<span id="t193" style="left:1860.18px;top:1113.30px;font-size:14px;color:#111;letter-spacing:0.214px">test-2</span>
<span id="t194" style="left:1914.52px;top:1113.30px;font-size:14px;color:#777;letter-spacing:0.189px">object.uid</span>
<span id="t195" style="left:1979.02px;top:1113.30px;font-size:14px;color:#bbb">=</span>
<span id="t196" style="left:1990.29px;top:1113.30px;font-size:14px;color:#111;letter-spacing:0.066px">bf8fe8b7-ce4e-4578-951d-68a7fd11b7da</span>
<span id="t197" style="left:2265.21px;top:1113.30px;font-size:14px;color:#777;letter-spacing:0.242px">oci-di...</span>
<span id="t198" style="left:788.39px;top:1136.20px;font-size:14px;color:#000;font-weight:700;letter-spacing:-0.622px">Process:</span>
<span id="t199" style="left:851.34px;top:1136.20px;font-size:14px;color:#777;letter-spacing:-0.192px">service.instance.id</span>
<span id="t200" style="left:966.21px;top:1136.20px;font-size:14px;color:#bbb">=</span>
<span id="t201" style="left:977.49px;top:1136.20px;font-size:14px;color:#111;letter-spacing:0.048px">f9b5e97d-3cd4-4e8a-b03f-3d44e5aaffbb</span>
<span id="t202" style="left:1248.97px;top:1136.20px;font-size:14px;color:#777;letter-spacing:-0.322px">service.namespace</span>
<span id="t203" style="left:1367.76px;top:1136.20px;font-size:14px;color:#bbb">=</span>
<span id="t204" style="left:1379.30px;top:1136.20px;font-size:14px;color:#111;letter-spacing:0.008px">flux-system</span>
</div></body></html>
